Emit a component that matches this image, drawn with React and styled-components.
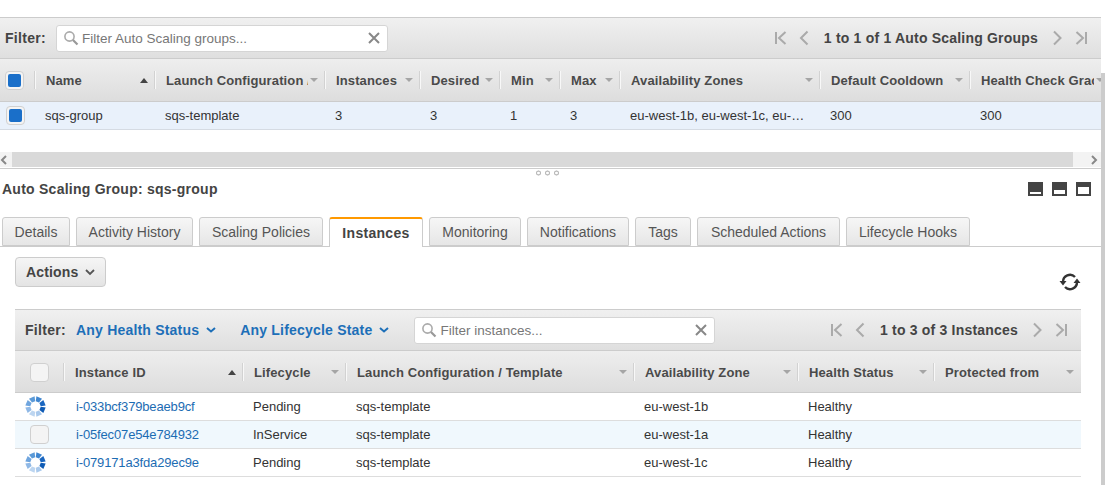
import React from "react";
import styled, { createGlobalStyle } from "styled-components";

const Global = createGlobalStyle`
  html, body { margin: 0; padding: 0; background: #fff; overflow: hidden; }
  body { font-family: "Liberation Sans", Arial, sans-serif; font-size: 13px; color: #333; }
  * { box-sizing: border-box; }
`;

const Page = styled.div`
  display: flex;
  width: 1105px;
  height: 485px;
  overflow: hidden;
`;
const Content = styled.div`
  width: 1101px;
  flex: none;
`;
const PageScroll = styled.div`
  width: 4px;
  margin-top: 73px;
  background: #ccc;
`;
const TopGap = styled.div`
  height: 17px;
`;

const FilterBar = styled.div`
  display: flex;
  align-items: center;
  height: 42px;
  padding: ${(p) => p.$pad};
  border-top: 1px solid #ccc;
  border-bottom: 1px solid #ccc;
  background: linear-gradient(#f0f0f0, #dfdfdf);
`;
const FilterLabel = styled.span`
  font-weight: bold;
  font-size: 14px;
  color: #444;
  letter-spacing: 0.3px;
`;
const SearchBox = styled.div`
  display: flex;
  align-items: center;
  width: ${(p) => p.$w}px;
  height: 27px;
  margin-left: ${(p) => p.$ml}px;
  padding: 0 7px 0 6px;
  background: #fff;
  border: 1px solid #d5d5d5;
  border-radius: 3px;
`;
const SearchText = styled.span`
  flex: 1;
  margin-left: 3px;
  font-size: 13.5px;
  color: #777;
`;
const Pager = styled.div`
  display: flex;
  align-items: center;
  margin-left: auto;
`;
const PagerText = styled.span`
  margin: 0 14px;
  font-weight: bold;
  font-size: 14px;
  color: #444;
  letter-spacing: 0.2px;
  white-space: nowrap;
`;
const PagerIcon = styled.svg`
  width: 12px;
  height: 16px;
  margin-left: ${(p) => p.$ml || 0}px;
  fill: none;
  stroke: #aaa;
  stroke-width: 2;
`;
const FilterMenu = styled.span`
  display: flex;
  align-items: center;
  gap: 7px;
  margin-left: ${(p) => p.$ml}px;
  font-weight: bold;
  font-size: 14px;
  letter-spacing: 0.2px;
  color: #1d6fb8;
`;

const HeadRow = styled.div`
  display: flex;
  align-items: center;
  height: ${(p) => p.$h}px;
  padding-top: ${(p) => p.$pt || 0}px;
  overflow: hidden;
  border-bottom: 1px solid #ccc;
  background: linear-gradient(#eeeeee, #dddddd);
`;
const HeadCheck = styled.div`
  display: flex;
  align-items: center;
  flex: none;
  width: ${(p) => p.$w}px;
  height: 100%;
  padding-left: ${(p) => p.$pad}px;
`;
const HeadCell = styled.div`
  display: flex;
  align-items: center;
  flex: none;
  width: ${(p) => p.$w}px;
  height: 100%;
`;
const Sep = styled.i`
  flex: none;
  width: 1px;
  height: 18px;
  background: #f8f8f8;
  box-shadow: -1px 0 0 #d2d2d2;
`;
const HeadLabel = styled.span`
  flex: 1;
  min-width: 0;
  margin: 0 2px 0 10px;
  overflow: hidden;
  white-space: nowrap;
  font-weight: bold;
  font-size: 13px;
  letter-spacing: 0.12px;
  color: #4a4a4a;
`;
const SortArrow = styled.i`
  flex: none;
  width: 0;
  height: 0;
  margin-right: 7px;
  border-left: 4px solid transparent;
  border-right: 4px solid transparent;
  ${(p) => (p.$asc ? "border-bottom: 5px solid #444;" : "border-top: 4px solid #a5a5a5;")}
`;

const Row = styled.div`
  display: flex;
  align-items: center;
  height: 28px;
  border-bottom: 1px solid ${(p) => p.$line};
  background: ${(p) => p.$bg};
`;
const CheckCell = styled.div`
  display: flex;
  align-items: center;
  flex: none;
  width: ${(p) => p.$w}px;
  padding-left: ${(p) => p.$pad}px;
`;
const Cell = styled.div`
  flex: none;
  width: ${(p) => p.$w}px;
  margin-right: ${(p) => p.$mr || 0}px;
  padding-left: 10px;
  overflow: hidden;
  white-space: nowrap;
  text-overflow: ellipsis;
  font-size: 13px;
  color: #333;
`;
const LinkCell = styled(Cell)`
  padding-left: 12px;
  letter-spacing: -0.15px;
  color: #1c6cb3;
`;
const Check = styled.span`
  display: flex;
  align-items: center;
  justify-content: center;
  width: 19px;
  height: 19px;
  background: #f4f4f4;
  border: 1px solid #d0d0d0;
  border-radius: 4px;
  &::after {
    content: "";
    display: ${(p) => (p.$on ? "block" : "none")};
    width: 13px;
    height: 13px;
    background: #1a6fc9;
    border-radius: 2px;
  }
`;

const HScroll = styled.div`
  display: flex;
  align-items: center;
  height: 15px;
  margin-top: 22px;
  background: #d9d9d9;
`;
const HScrollBtn = styled.div`
  display: flex;
  align-items: center;
  justify-content: ${(p) => (p.$end ? "flex-end" : "flex-start")};
  width: ${(p) => p.$w}px;
  height: 100%;
  margin-left: ${(p) => (p.$end ? "auto" : 0)};
  padding-right: ${(p) => (p.$end ? 3 : 0)}px;
  background: #f3f3f3;
`;
const Sash = styled.div`
  position: relative;
  height: 1px;
  margin-top: 1px;
  background: #ccc;
  &::after {
    content: "";
    position: absolute;
    left: 536px;
    top: 2px;
    width: 23px;
    height: 6px;
    background-image: radial-gradient(circle at 2.5px 3px, #fff 1px, #bbb 1.6px, #bbb 2.3px, transparent 2.8px);
    background-size: 9px 6px;
  }
`;

const TitleBar = styled.div`
  display: flex;
  align-items: center;
  justify-content: space-between;
  height: 40px;
  padding: 0 10px 0 2px;
`;
const Title = styled.h2`
  margin: 0;
  font-weight: bold;
  font-size: 14px;
  letter-spacing: 0.25px;
  color: #444;
`;
const PaneIcons = styled.div`
  display: flex;
  gap: 9px;
`;
const PaneIcon = styled.span`
  display: flex;
  align-items: flex-end;
  justify-content: center;
  width: 15px;
  height: 14px;
  padding-bottom: 2px;
  background: #444;
  &::after {
    content: "";
    width: 11px;
    height: ${(p) => p.$fill}px;
    background: #fff;
  }
`;

const Tabs = styled.div`
  display: flex;
  align-items: flex-end;
  gap: 6px;
  height: 31px;
  margin-top: 7px;
  padding-left: 2px;
  border-bottom: 1px solid #ccc;
`;
const Tab = styled.div`
  display: flex;
  align-items: center;
  justify-content: center;
  flex: none;
  width: ${(p) => p.$w}px;
  height: ${(p) => (p.$active ? 30 : 29)}px;
  margin-bottom: ${(p) => (p.$active ? -1 : 0)}px;
  font-size: 14px;
  font-weight: ${(p) => (p.$active ? "bold" : "normal")};
  letter-spacing: ${(p) => (p.$active ? "0.3px" : "0")};
  color: ${(p) => (p.$active ? "#444" : "#555")};
  background: ${(p) => (p.$active ? "#fff" : "linear-gradient(#f6f6f6, #e6e6e6)")};
  border: 1px solid #ccc;
  border-top: ${(p) => (p.$active ? "2px solid #f90" : "1px solid #ccc")};
  border-bottom: ${(p) => (p.$active ? "none" : "1px solid #ccc")};
  border-radius: 3px 3px 0 0;
`;

const Pane = styled.div`
  padding: 10px 20px 0 15px;
`;
const Toolbar = styled.div`
  display: flex;
  justify-content: space-between;
  height: 52px;
`;
const ActionsBtn = styled.button`
  display: flex;
  align-items: center;
  gap: 7px;
  width: 91px;
  height: 30px;
  padding: 0 0 0 10px;
  font-family: inherit;
  font-weight: bold;
  font-size: 14px;
  letter-spacing: 0.15px;
  color: #444;
  background: linear-gradient(#f5f5f5, #e4e4e4);
  border: 1px solid #ccc;
  border-radius: 4px;
`;
const RefreshIcon = styled.svg`
  width: 22px;
  height: 22px;
  margin: 14px 0 0;
`;

const Spinner = () => {
  const shades = ["#3f86d0", "#1a66c0", "#0f5bb5", "#a9c9ec", "#bcd5f0", "#8fb8e6", "#6fa5de", "#5b9ad8"];
  return (
    <svg width="21" height="21" viewBox="0 0 22 22">
      {shades.map((c, i) => (
        <path
          key={i}
          d="M7.8 0.8h6.4l-1.4 5h-3.6z"
          fill={c}
          transform={`rotate(${i * 45 + 22.5} 11 11)`}
        />
      ))}
    </svg>
  );
};

const SearchIcon = () => (
  <svg width="16" height="16" viewBox="0 0 16 16" fill="none">
    <circle cx="6.5" cy="6.5" r="4.6" stroke="#aaa" strokeWidth="1.6" />
    <path d="M10 10l4.5 4.5" stroke="#999" strokeWidth="2.2" />
  </svg>
);

const ClearIcon = () => (
  <svg width="12" height="12" viewBox="0 0 12 12">
    <path d="M1 1l10 10M11 1L1 11" stroke="#888" strokeWidth="2" />
  </svg>
);

const MenuChevron = () => (
  <svg width="10" height="6" viewBox="0 0 10 6">
    <path d="M1 1l4 3.5L9 1" fill="none" stroke="#1d6fb8" strokeWidth="2" />
  </svg>
);

const PagerButtons = ({ text }) => (
  <Pager>
    <PagerIcon viewBox="0 0 12 16">
      <path d="M1 2v12M10.5 2L4 8l6.5 6" />
    </PagerIcon>
    <PagerIcon viewBox="0 0 12 16" $ml={11}>
      <path d="M9.5 1.5L3 8l6.5 6.5" />
    </PagerIcon>
    <PagerText>{text}</PagerText>
    <PagerIcon viewBox="0 0 12 16">
      <path d="M2 1.5L8.5 8 2 14.5" />
    </PagerIcon>
    <PagerIcon viewBox="0 0 12 16" $ml={11}>
      <path d="M11 2v12M1.5 2L8 8l-6.5 6" />
    </PagerIcon>
  </Pager>
);

const groupColumns = [
  { label: "Name", w: 120, asc: true },
  { label: "Launch Configuration / Template", w: 170 },
  { label: "Instances", w: 95 },
  { label: "Desired", w: 80 },
  { label: "Min", w: 60 },
  { label: "Max", w: 60 },
  { label: "Availability Zones", w: 200 },
  { label: "Default Cooldown", w: 150 },
  { label: "Health Check Grace Period", w: 141 },
];
const groupRow = [
  "sqs-group",
  "sqs-template",
  "3",
  "3",
  "1",
  "3",
  "eu-west-1b, eu-west-1c, eu-west-1a",
  "300",
  "300",
];

const instanceColumns = [
  { label: "Instance ID", w: 179, asc: true },
  { label: "Lifecycle", w: 103 },
  { label: "Launch Configuration / Template", w: 288 },
  { label: "Availability Zone", w: 164 },
  { label: "Health Status", w: 136 },
  { label: "Protected from", w: 147 },
];
const instances = [
  { id: "i-033bcf379beaeb9cf", state: "Pending", zone: "eu-west-1b", busy: true },
  { id: "i-05fec07e54e784932", state: "InService", zone: "eu-west-1a" },
  { id: "i-079171a3fda29ec9e", state: "Pending", zone: "eu-west-1c", busy: true },
];
const tabs = [
  { label: "Details", w: 68 },
  { label: "Activity History", w: 117 },
  { label: "Scaling Policies", w: 124 },
  { label: "Instances", w: 94 },
  { label: "Monitoring", w: 92 },
  { label: "Notifications", w: 102 },
  { label: "Tags", w: 56 },
  { label: "Scheduled Actions", w: 143 },
  { label: "Lifecycle Hooks", w: 124 },
];

const HeaderCells = ({ columns }) =>
  columns.map((c) => (
    <HeadCell key={c.label} $w={c.w}>
      <Sep />
      <HeadLabel>{c.label}</HeadLabel>
      <SortArrow $asc={c.asc} />
    </HeadCell>
  ));

export default function App() {
  return (
    <Page>
      <Global />
      <Content>
        <TopGap />
        <FilterBar $pad="0 14px 0 5px">
          <FilterLabel>Filter:</FilterLabel>
          <SearchBox $w={332} $ml={10}>
            <SearchIcon />
            <SearchText>Filter Auto Scaling groups...</SearchText>
            <ClearIcon />
          </SearchBox>
          <PagerButtons text="1 to 1 of 1 Auto Scaling Groups" />
        </FilterBar>
        <HeadRow $h={43}>
          <HeadCheck $w={35} $pad={5}>
            <Check $on />
          </HeadCheck>
          <HeaderCells columns={groupColumns} />
        </HeadRow>
        <Row $bg="#e9f1fb" $line="#d5dbe3">
          <CheckCell $w={35} $pad={6}>
            <Check $on />
          </CheckCell>
          {groupRow.map((v, i) => (
            <Cell key={i} $w={groupColumns[i].w - (i === 6 ? 15 : 0)} $mr={i === 6 ? 15 : 0}>
              {v}
            </Cell>
          ))}
        </Row>
        <HScroll>
          <HScrollBtn $w={12}>
            <svg width="8" height="10" viewBox="0 0 8 10">
              <path d="M6 1L2 5l4 4" fill="none" stroke="#888" strokeWidth="2" />
            </svg>
          </HScrollBtn>
          <HScrollBtn $w={28} $end>
            <svg width="8" height="10" viewBox="0 0 8 10">
              <path d="M2 1l4 4-4 4" fill="none" stroke="#888" strokeWidth="2" />
            </svg>
          </HScrollBtn>
        </HScroll>
        <Sash />
        <TitleBar>
          <Title>Auto Scaling Group: sqs-group</Title>
          <PaneIcons>
            <PaneIcon $fill={2} />
            <PaneIcon $fill={4} />
            <PaneIcon $fill={7} />
          </PaneIcons>
        </TitleBar>
        <Tabs>
          {tabs.map((t) => (
            <Tab key={t.label} $w={t.w} $active={t.label === "Instances"}>
              {t.label}
            </Tab>
          ))}
        </Tabs>
        <Pane>
          <Toolbar>
            <ActionsBtn>
              Actions
              <svg width="10" height="7" viewBox="0 0 10 7">
                <path d="M1 1l4 4 4-4" fill="none" stroke="#555" strokeWidth="1.8" />
              </svg>
            </ActionsBtn>
            <RefreshIcon viewBox="0 0 22 22" fill="none">
              <path d="M4 11a7 7 0 0 1 12-5" stroke="#333" strokeWidth="2.4" />
              <path d="M18 11a7 7 0 0 1-12 5" stroke="#333" strokeWidth="2.4" />
              <path d="M0.5 10h7l-3.5 4.5zM21.5 12h-7l3.5-4.5z" fill="#333" />
            </RefreshIcon>
          </Toolbar>
          <FilterBar $pad="0 14px 0 10px">
            <FilterLabel>Filter:</FilterLabel>
            <FilterMenu $ml={10}>
              Any Health Status
              <MenuChevron />
            </FilterMenu>
            <FilterMenu $ml={24}>
              Any Lifecycle State
              <MenuChevron />
            </FilterMenu>
            <SearchBox $w={301} $ml={25}>
              <SearchIcon />
              <SearchText>Filter instances...</SearchText>
              <ClearIcon />
            </SearchBox>
            <PagerButtons text="1 to 3 of 3 Instances" />
          </FilterBar>
          <HeadRow $h={42} $pt={1}>
            <HeadCheck $w={49} $pad={15}>
              <Check />
            </HeadCheck>
            <HeaderCells columns={instanceColumns} />
          </HeadRow>
          {instances.map((r) => (
            <Row key={r.id} $bg={r.busy ? "#fff" : "#f0f8fd"} $line="#ddd">
              <CheckCell $w={49} $pad={r.busy ? 10 : 15}>
                {r.busy ? <Spinner /> : <Check />}
              </CheckCell>
              <LinkCell $w={179}>{r.id}</LinkCell>
              <Cell $w={103}>{r.state}</Cell>
              <Cell $w={288}>sqs-template</Cell>
              <Cell $w={164}>{r.zone}</Cell>
              <Cell $w={136}>Healthy</Cell>
            </Row>
          ))}
        </Pane>
      </Content>
      <PageScroll />
    </Page>
  );
}
